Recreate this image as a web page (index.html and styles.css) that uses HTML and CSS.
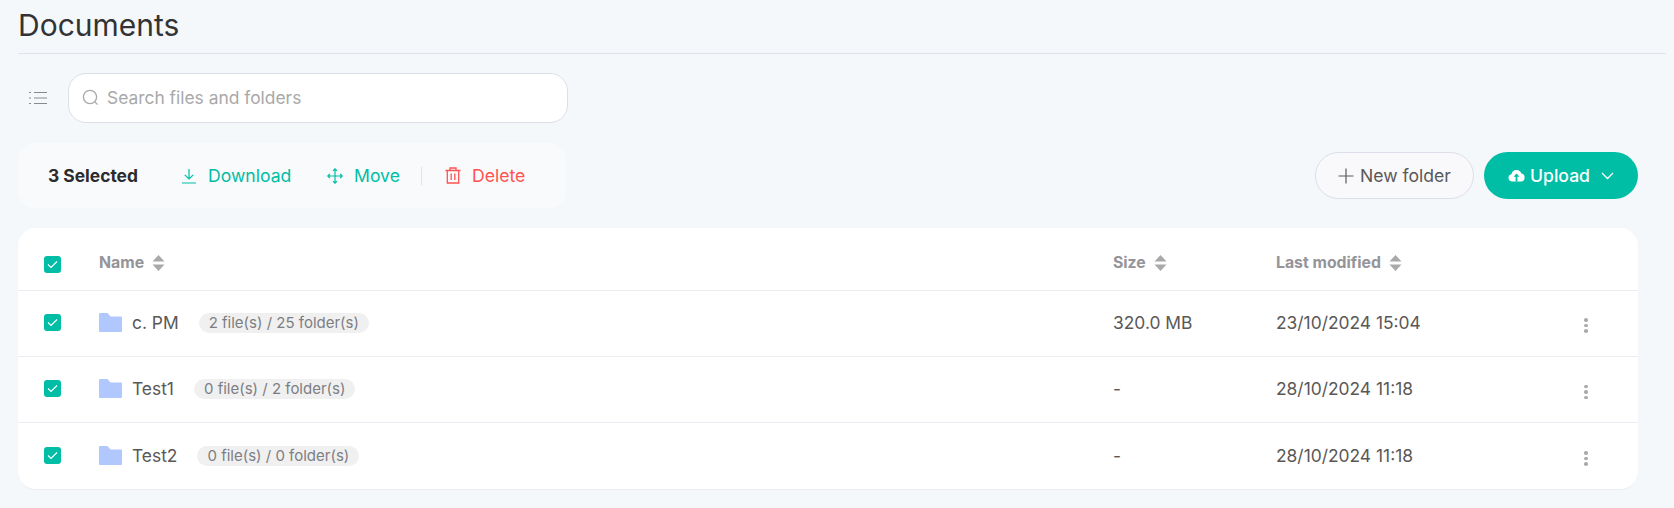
FILE: index.html
```html
<!doctype html>
<html lang="en-US">
<head>
<meta charset="utf-8" />
<title>Documents</title>
<link rel="stylesheet" href="styles.css">
</head>
<body>
<div class="header">
	<h1>Documents</h1>
</div>

<div class="search-row">
	<svg class="list-icon" width="18" height="14" viewBox="0 0 18 14" fill="none" stroke="#8a8a8a" stroke-width="1.2">
		<path d="M0 1.5h2M0 7h2M0 12.5h2M5 1.5h13M5 7h13M5 12.5h13" />
	</svg>
	<div class="search">
		<svg width="17" height="17" viewBox="0 0 17 17" fill="none" stroke="#aaa9a9" stroke-width="1.3">
			<circle cx="8" cy="8" r="6.6" />
			<path d="M13 13l2.6 2.6" />
		</svg>
		<span>Search files and folders</span>
	</div>
</div>

<div class="toolbar">
	<div class="selection">
		<b>3 Selected</b>
		<a class="action green action-download">
			<svg width="16" height="16" viewBox="0 0 16 16" fill="none" stroke="#00bda5" stroke-width="1.2">
				<path d="M8 1v9.5M3.8 6.8L8 11l4.2-4.2M1 15h14" />
			</svg>
			Download
		</a>
		<a class="action green action-move">
			<svg width="16" height="16" viewBox="0 0 16 16" fill="none" stroke="#00bda5" stroke-width="1.2">
				<path d="M8 .8v14.4M.8 8h14.4M6 2.8L8 .8l2 2M6 13.2l2 2 2-2M2.8 6L.8 8l2 2M13.2 6l2 2-2 2" />
			</svg>
			Move
		</a>
		<span class="divider"></span>
		<a class="action red">
			<svg width="16" height="17" viewBox="0 0 16 17" fill="none" stroke="#ff5252" stroke-width="1.3">
				<path d="M0.5 3.5h15M5 3.5V1h6v2.5M2.3 3.5V16h11.4V3.5M6.2 6.5v6.5M9.8 6.5v6.5" />
			</svg>
			Delete
		</a>
	</div>
	<div class="buttons">
		<button class="btn-folder">
			<svg width="16" height="16" viewBox="0 0 16 16" fill="none" stroke="#5a5a5a" stroke-width="1.2">
				<path d="M8 .5v15M.5 8h15" />
			</svg>
			New folder
		</button>
		<button class="btn-upload">
			<svg width="17" height="13" viewBox="0 0 17 13">
				<path fill="#fff" d="M4 12.5a3.7 3.7 0 0 1-.6-7.3A5.2 5.2 0 0 1 13.4 4.6a4 4 0 0 1-.4 7.9z" />
				<path fill="#00bda5" d="M8.5 4.5l3 3.3H9.4v4.7H7.6V7.8H5.5z" />
			</svg>
			Upload
			<svg class="chevron" width="13" height="8" viewBox="0 0 13 8" fill="none" stroke="#fff" stroke-width="1.3">
				<path d="M1 1l5.500 5.500L12 1" />
			</svg>
		</button>
	</div>
</div>

<div class="card">
	<div class="row head">
		<span class="check"><svg width="11" height="9" viewBox="0 0 11 9" fill="none" stroke="#fff" stroke-width="1.2"><path d="M1 4.500l3 3 6-6" /></svg></span>
		<div class="sortable">Name <svg width="13" height="16" viewBox="0 0 13 16" fill="#a9a9a9"><path d="M6.500 0l6 6.500H.5zM6.500 16l6-6.500H.5z" /></svg></div>
		<div class="sortable">Size <svg width="13" height="16" viewBox="0 0 13 16" fill="#a9a9a9"><path d="M6.500 0l6 6.500H.5zM6.500 16l6-6.500H.5z" /></svg></div>
		<div class="sortable">Last modified <svg width="13" height="16" viewBox="0 0 13 16" fill="#a9a9a9"><path d="M6.500 0l6 6.500H.5zM6.500 16l6-6.500H.5z" /></svg></div>
		<div></div>
	</div>

	<div class="row">
		<span class="check"><svg width="11" height="9" viewBox="0 0 11 9" fill="none" stroke="#fff" stroke-width="1.2"><path d="M1 4.500l3 3 6-6" /></svg></span>
		<div class="name">
			<svg class="folder" width="23" height="19" viewBox="0 0 23 19"><path fill="#b1c8ff" d="M0 1a1 1 0 0 1 1-1h7.500l3 3.500H22a1 1 0 0 1 1 1V18a1 1 0 0 1-1 1H1a1 1 0 0 1-1-1z" /></svg>
			<span class="title">c. PM</span>
			<span class="pill">2 file(s) / 25 folder(s)</span>
		</div>
		<div>320.0 MB</div>
		<div>23/10/2024 15:04</div>
		<div class="kebab"><i></i><i></i><i></i></div>
	</div>

	<div class="row">
		<span class="check"><svg width="11" height="9" viewBox="0 0 11 9" fill="none" stroke="#fff" stroke-width="1.2"><path d="M1 4.500l3 3 6-6" /></svg></span>
		<div class="name">
			<svg class="folder" width="23" height="19" viewBox="0 0 23 19"><path fill="#b1c8ff" d="M0 1a1 1 0 0 1 1-1h7.500l3 3.500H22a1 1 0 0 1 1 1V18a1 1 0 0 1-1 1H1a1 1 0 0 1-1-1z" /></svg>
			<span class="title">Test1</span>
			<span class="pill">0 file(s) / 2 folder(s)</span>
		</div>
		<div>-</div>
		<div>28/10/2024 11:18</div>
		<div class="kebab"><i></i><i></i><i></i></div>
	</div>

	<div class="row">
		<span class="check"><svg width="11" height="9" viewBox="0 0 11 9" fill="none" stroke="#fff" stroke-width="1.2"><path d="M1 4.500l3 3 6-6" /></svg></span>
		<div class="name">
			<svg class="folder" width="23" height="19" viewBox="0 0 23 19"><path fill="#b1c8ff" d="M0 1a1 1 0 0 1 1-1h7.500l3 3.500H22a1 1 0 0 1 1 1V18a1 1 0 0 1-1 1H1a1 1 0 0 1-1-1z" /></svg>
			<span class="title">Test2</span>
			<span class="pill">0 file(s) / 0 folder(s)</span>
		</div>
		<div>-</div>
		<div>28/10/2024 11:18</div>
		<div class="kebab"><i></i><i></i><i></i></div>
	</div>
</div>
</body>
</html>
```

FILE: styles.css
```css
* {
	box-sizing: border-box;
}
body {
	margin: 0;
	padding: 0 8px 0 18px;
	background-color: #f5f8fb;
	color: #5a5856;
	font-family: "Inter", "Liberation Sans", sans-serif;
	font-size: 17.4px;
}
svg {
	display: block;
	flex: none;
}
.header {
	height: 54px;
	border-bottom: 1px solid #dfe3ec;
	padding-top: 6px;
}
h1 {
	margin: 0;
	color: #333335;
	font-size: 30px;
	font-weight: 400;
	line-height: 38px;
}
.search-row {
	display: flex;
	align-items: center;
	gap: 21px;
	margin-top: 19px;
	padding-left: 11px;
}
.search {
	display: flex;
	align-items: center;
	gap: 8px;
	width: 500px;
	height: 50px;
	padding-left: 13px;
	padding-bottom: 2px;
	background-color: #fff;
	border: 1px solid #dcdfe8;
	border-radius: 18px;
	color: #a9a9a9;
	font-size: 17.4px;
}
.toolbar {
	display: flex;
	justify-content: space-between;
	align-items: center;
	width: 1620px;
	margin-top: 20px;
}
.selection {
	display: flex;
	align-items: center;
	width: 548px;
	height: 65px;
	padding-left: 30px;
	background-color: #f9fafb;
	border-radius: 18px;
}
.selection b {
	color: #2b2b2d;
	font-weight: 700;
	font-size: 17.4px;
	width: 133px;
	margin-top: -1px;
}
.action {
	display: flex;
	align-items: center;
	gap: 11px;
	font-size: 17.6px;
}
.action-download {
	width: 146px;
}
.green {
	color: #00bda5;
}
.red {
	color: #ff5252;
}
.action-move {
	width: 94px;
}
.divider {
	width: 1px;
	height: 18px;
	background-color: #dfe3ec;
	margin-right: 23px;
}
.buttons {
	display: flex;
	gap: 10px;
}
button {
	display: flex;
	align-items: center;
	justify-content: center;
	height: 47px;
	border-radius: 24px;
	font-family: inherit;
	font-size: 17.6px;
	font-weight: 400;
}
.btn-folder {
	width: 159px;
	gap: 6px;
	background-color: #f9f9fb;
	border: 1px solid #dcdfe8;
	color: #5a5856;
}
.btn-upload {
	width: 154px;
	gap: 5px;
	background-color: #00bda5;
	border: 0;
	color: #fff;
	font-weight: 500;
}
.chevron {
	margin-left: 6px;
}
.card {
	width: 1620px;
	margin-top: 20px;
	background-color: #fff;
	border-radius: 18px;
	border-bottom: 1px solid #ebedf3;
}
.row {
	display: grid;
	grid-template-columns: 55px 1014px 163px 1fr 54px;
	align-items: center;
	height: 66.3px;
	padding-left: 26px;
	padding-bottom: 1px;
	border-bottom: 1px solid #ebedf3;
}
.row:last-child {
	border-bottom: 0;
}
.head {
	height: 62.5px;
	padding-bottom: 0;
	padding-top: 8px;
	color: #949499;
	font-size: 15.8px;
	font-weight: 700;
}
.check {
	display: flex;
	align-items: center;
	justify-content: center;
	width: 17px;
	height: 17px;
	background-color: #00bda5;
	border-radius: 3px;
}
.head .check {
	margin-top: 3px;
}
.sortable {
	display: flex;
	align-items: center;
	gap: 8px;
}
.name {
	display: flex;
	align-items: center;
}
.title {
	margin-left: 10px;
	margin-right: 20px;
}
.pill {
	height: 20px;
	padding: 0 10px;
	background-color: #f0f0f0;
	border-radius: 10px;
	color: #7d7e83;
	font-size: 15px;
	line-height: 20px;
}
.kebab {
	display: flex;
	flex-direction: column;
	gap: 2px;
	width: 4px;
	padding-top: 6px;
}
.kebab i {
	width: 4px;
	height: 3.500px;
	background-color: #a9a9a9;
	border-radius: 50%;
}
```
